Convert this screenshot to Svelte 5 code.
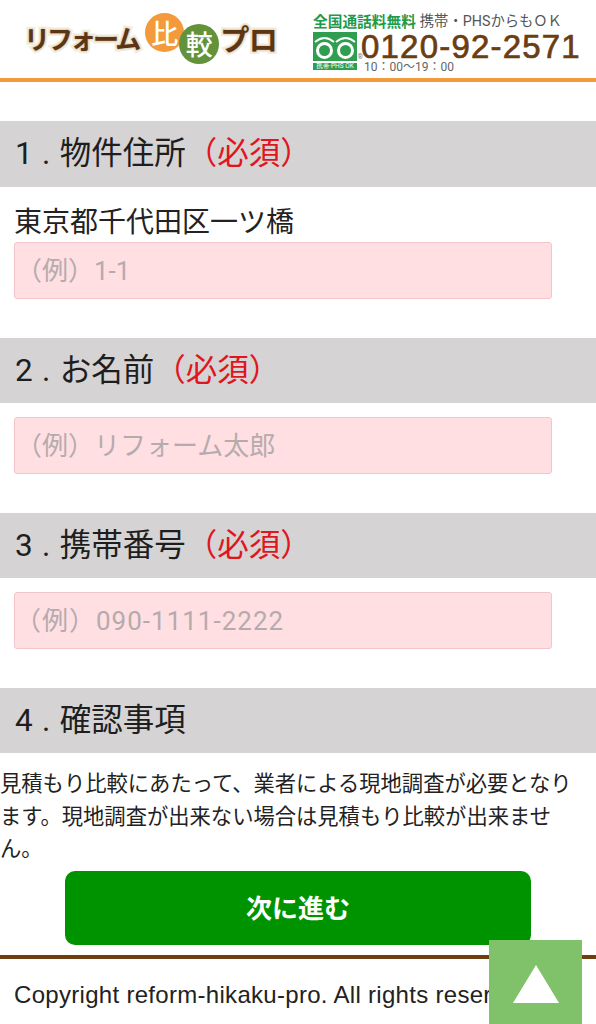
<script>
    const sections = [
        { no: '2', title: 'お名前', placeholder: '（例）リフォーム太郎', wide: false },
        { no: '3', title: '携帯番号', placeholder: '（例）090-1111-2222', wide: true }
    ];
</script>

<header>
    <div class="logo">
        <span class="logo-text">リフォーム</span>
        <span class="ball orange">比</span>
        <span class="ball green">較</span>
        <span class="logo-text short">プロ</span>
    </div>
    <div class="tel">
        <div class="tel-top"><b>全国通話料無料</b><span>携帯・PHSからもＯＫ</span></div>
        <div class="tel-main">
            <div class="free">
                <svg width="44" height="29" viewBox="0 0 44 29">
                    <rect width="44" height="29" fill="#2f9e4f" />
                    <circle cx="11.5" cy="18.5" r="7" fill="none" stroke="#fff" stroke-width="3" />
                    <circle cx="32.5" cy="18.5" r="7" fill="none" stroke="#fff" stroke-width="3" />
                    <path d="M2 10 C8 5 15 5 21 10 M23 10 C29 5 36 5 42 10" fill="none" stroke="#fff" stroke-width="2" />
                </svg>
                <span class="reg">®</span>
                <span class="free-label">携帯·PHS OK</span>
            </div>
            <div class="number">
                <strong>0120-92-2571</strong>
                <small>10：00〜19：00</small>
            </div>
        </div>
    </div>
</header>

<main>
    <section>
        <h2><span>1 . 物件住所<em>（必須）</em></span></h2>
        <p class="address">東京都千代田区一ツ橋</p>
        <input type="text" placeholder="（例）1-1" />
    </section>

    {#each sections as s}
        <section>
            <h2><span>{s.no} . {s.title}<em>（必須）</em></span></h2>
            <input class="spaced" class:wide={s.wide} type="text" placeholder={s.placeholder} />
        </section>
    {/each}

    <section>
        <h2><span>4 . 確認事項</span></h2>
        <p class="note">見積もり比較にあたって、業者による現地調査が必要となります。現地調査が出来ない場合は見積もり比較が出来ません。</p>
    </section>

    <button type="button" class="next">次に進む</button>
</main>

<footer>Copyright reform-hikaku-pro. All rights reserved.</footer>

<a class="top" href="#top" aria-label="ページ上部へ">
    <svg width="46" height="38" viewBox="0 0 46 38"><path d="M23 0 L46 38 L0 38 Z" fill="#fff" /></svg>
</a>

<style>
    :global(body) {
        font-family: Roboto, "Noto Sans CJK JP", sans-serif;
        color: #222;
        background: #fff;
        overflow: hidden;
    }
    header {
        height: 78px;
        border-bottom: 4px solid #f39a3c;
        display: flex;
        justify-content: space-between;
        padding: 0 16px 0 24px;
    }
    .logo {
        display: flex;
        align-items: center;
        margin-top: -3px;
    }
    .logo-text {
        font-family: "Noto Sans CJK JP", sans-serif;
        font-size: 26px;
        font-weight: 700;
        color: #5f3413;
        letter-spacing: -3px;
        -webkit-text-stroke: 5px #f3eedf;
        paint-order: stroke fill;
        text-shadow: 0 0 2px #a89c78;
    }
    .logo-text.short {
        font-size: 29px;
        letter-spacing: -0.5px;
    }
    .ball {
        width: 39px;
        height: 39px;
        border-radius: 50%;
        display: flex;
        align-items: center;
        justify-content: center;
        color: #fff;
        font-family: "Noto Sans CJK JP", sans-serif;
        font-size: 27px;
        font-weight: 500;
    }
    .orange {
        background: #f39a3c;
        margin: -11px 0 0 7px;
    }
    .green {
        width: 40px;
        height: 40px;
        background: #62933a;
        margin: 12px 1px 0 -5px;
    }
    .tel {
        padding-top: 11px;
        width: 267px;
    }
    .tel-top {
        display: flex;
        align-items: center;
        height: 20px;
        font-size: 14.3px;
        line-height: 1;
        color: #555;
        white-space: nowrap;
    }
    .tel-top b {
        font-family: "Noto Sans CJK JP", sans-serif;
        font-size: 14.7px;
        color: #1d9a4a;
        margin-right: 4px;
    }
    .tel-main {
        display: flex;
        margin-top: 1px;
    }
    .free {
        position: relative;
        width: 44px;
        display: flex;
        flex-direction: column;
        gap: 2px;
    }
    .free svg {
        display: block;
    }
    .reg {
        position: absolute;
        right: -6px;
        top: 22px;
        font-size: 7px;
        line-height: 7px;
        color: #777;
    }
    .free-label {
        background: #2f9e4f;
        color: #fff;
        font-size: 6.5px;
        line-height: 7px;
        height: 7px;
        text-align: center;
        white-space: nowrap;
    }
    .number {
        margin-left: 4px;
        display: flex;
        flex-direction: column;
    }
    .number strong {
        font-family: "Liberation Sans", sans-serif;
        font-size: 33px;
        line-height: 30px;
        font-weight: 400;
        -webkit-text-stroke: 0.7px #6b3d12;
        letter-spacing: 1.2px;
        color: #6b3d12;
        white-space: nowrap;
    }
    .number small {
        font-size: 12px;
        line-height: 10px;
        color: #666;
        margin-left: 3px;
    }
    main {
        display: flex;
        flex-direction: column;
        padding-top: 39px;
    }
    section {
        margin-bottom: 38.5px;
    }
    section:last-of-type {
        margin-bottom: 0;
    }
    h2 {
        margin: 0;
        height: 65.5px;
        display: flex;
        align-items: center;
        padding-left: 15px;
        background: #d5d3d4;
        font-size: 31.5px;
        font-weight: 400;
        color: #1e1e1e;
        white-space: pre;
        word-spacing: 1.5px;
    }
    h2 span {
        margin-top: -7px;
    }
    h2 em {
        font-style: normal;
        color: #e0151d;
    }
    .address {
        margin: 0;
        padding: 18.5px 0 0 14px;
        height: 37px;
        font-size: 28px;
        line-height: 36px;
    }
    input {
        display: block;
        box-sizing: border-box;
        width: 538px;
        height: 57px;
        margin-left: 14px;
        padding: 0 1px;
        background: #ffdfe2;
        border: 1px solid #f4c4cb;
        border-radius: 3px;
        font: inherit;
        font-size: 26px;
        outline: none;
    }
    input::placeholder {
        color: #b5abae;
        opacity: 1;
    }
    input.spaced {
        margin-top: 14px;
    }
    input.wide {
        padding: 0;
        letter-spacing: 1px;
    }
    .note {
        margin: 15px 16px 0 0;
        font-size: 21.3px;
        line-height: 32.5px;
    }
    .next {
        align-self: center;
        width: 466px;
        height: 74px;
        margin-top: 5px;
        background: #009300;
        color: #fff;
        border: none;
        border-radius: 10px;
        font: inherit;
        font-size: 26px;
        font-weight: 700;
        padding-bottom: 3px;
    }
    footer {
        margin-top: 10px;
        border-top: 4px solid #6f3f12;
        padding: 20px 14px 0;
        font-family: "Liberation Sans", sans-serif;
        font-size: 24px;
        letter-spacing: 0.3px;
        line-height: 32px;
        white-space: nowrap;
    }
    .top {
        position: fixed;
        left: 489px;
        top: 940px;
        width: 93px;
        height: 84px;
        background: #80c269;
        display: flex;
        align-items: flex-start;
        justify-content: center;
        padding-top: 25px;
        box-sizing: border-box;
    }
    .top svg {
        display: block;
    }
</style>
